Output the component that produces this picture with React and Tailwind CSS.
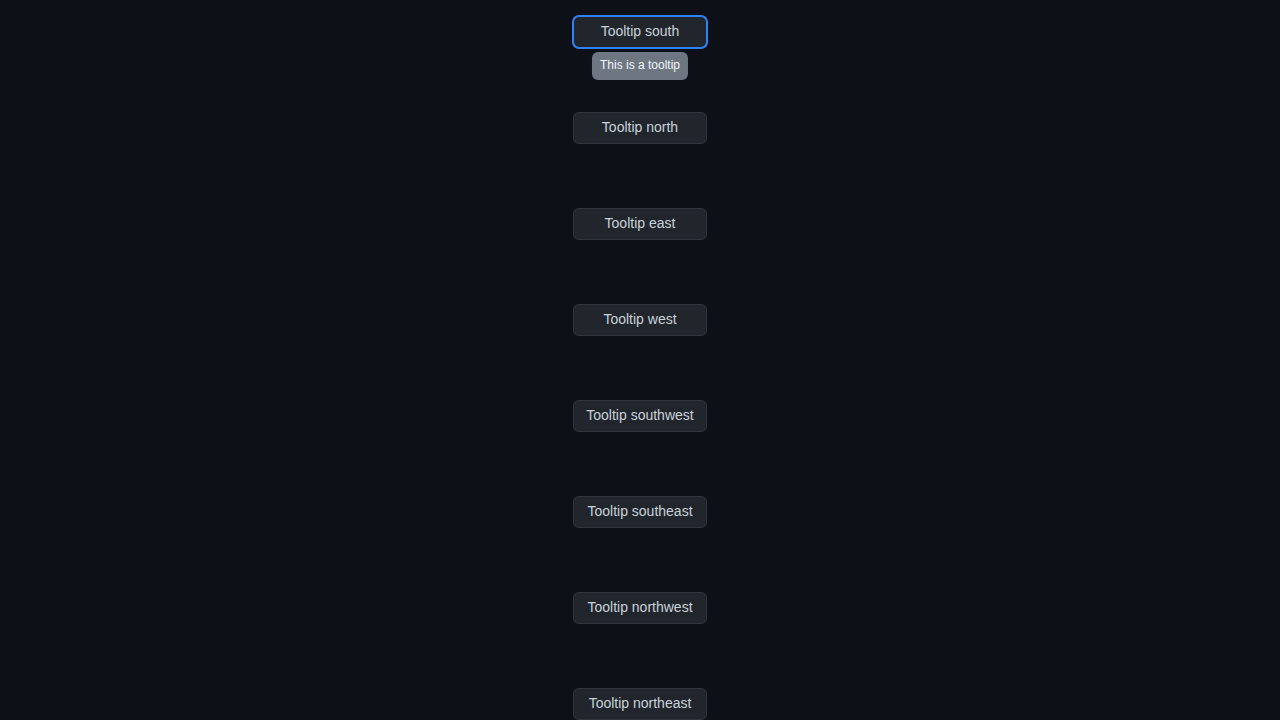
import React from "react";

const directions = [
    "south",
    "north",
    "east",
    "west",
    "southwest",
    "southeast",
    "northwest",
    "northeast"
];

function TooltipButton({ label, active }) {
    return (
        <div className="relative h-[96px] flex justify-center">
            <button
                type="button"
                className={
                    active
                        ? "w-[134px] h-8 pb-0.5 rounded-md bg-[#21262d] border border-[#30363d] text-[#c9d1d9] text-sm outline-2 outline-[#2f81f7] -outline-offset-1"
                        : "w-[134px] h-8 pb-0.5 rounded-md bg-[#21262d] border border-[#30363d] text-[#c9d1d9] text-sm"
                }
            >
                Tooltip {label}
            </button>
            {active && (
                <div className="absolute top-[36px] left-1/2 -translate-x-1/2 h-7 px-2 pb-0.5 flex items-center rounded-md bg-[#6e7681] text-[#f0f6fc] text-xs whitespace-nowrap">
                    This is a tooltip
                </div>
            )}
        </div>
    );
}

export default function App() {
    return (
        <div
            className="min-h-screen bg-[#0d1117] pt-4"
            style={{ fontFamily: '"Liberation Sans", Arial, sans-serif' }}
        >
            {directions.map((d, i) => (
                <TooltipButton key={d} label={d} active={i === 0} />
            ))}
        </div>
    );
}
